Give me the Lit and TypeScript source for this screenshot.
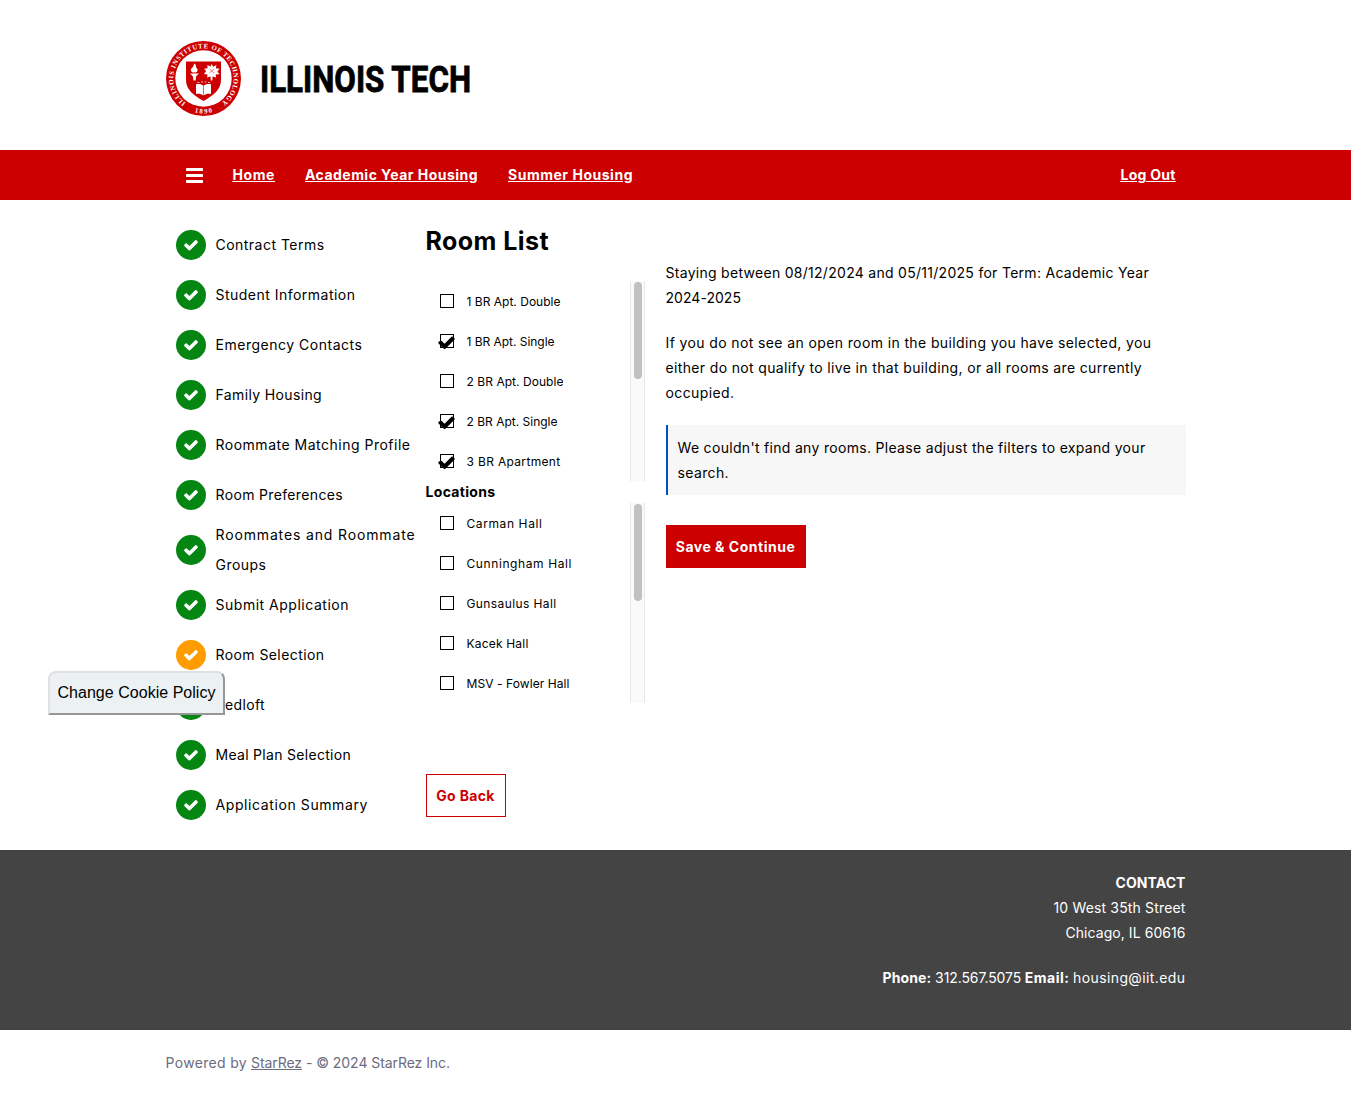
import { LitElement, html, css, svg } from "lit";
import { customElement, property } from "lit/decorators.js";
import { classMap } from "lit/directives/class-map.js";

/** A single line of text, tracked evenly so that it fills a given measure. */
@customElement("tracked-line")
class TrackedLine extends LitElement {
  static styles = css`
    :host {
      display: inline-block;
      white-space: nowrap;
      text-decoration: inherit;
    }
  `;
  @property({ type: Number }) measure = 0;

  protected firstUpdated() {
    this.fit();
    document.fonts?.ready.then(() => this.fit());
  }

  private fit() {
    const count = (this.textContent ?? "").length;
    if (!count || !this.measure) return;
    this.style.letterSpacing = "0px";
    const natural = this.getBoundingClientRect().width;
    this.style.letterSpacing = `${(this.measure - natural) / count}px`;
  }

  render() {
    return html`<slot></slot>`;
  }
}

type Line = [text: string, measure: number];
const line = ([text, measure]: Line) =>
  html`<tracked-line measure=${measure}>${text}</tracked-line>`;

const steps: { lines: Line[]; current?: boolean }[] = [
  { lines: [["Contract Terms", 109]] },
  { lines: [["Student Information", 140]] },
  { lines: [["Emergency Contacts", 147]] },
  { lines: [["Family Housing", 106.5]] },
  { lines: [["Roommate Matching Profile", 195]] },
  { lines: [["Room Preferences", 127.5]] },
  { lines: [["Roommates and Roommate", 200], ["Groups", 51]] },
  { lines: [["Submit Application", 133.5]] },
  { lines: [["Room Selection", 109]], current: true },
  { lines: [["Bedloft", 49.5]] },
  { lines: [["Meal Plan Selection", 135.5]] },
  { lines: [["Application Summary", 152.5]] },
];

const roomTypes: { label: Line; checked?: boolean }[] = [
  { label: ["1 BR Apt. Double", 94] },
  { label: ["1 BR Apt. Single", 88], checked: true },
  { label: ["2 BR Apt. Double", 97] },
  { label: ["2 BR Apt. Single", 91], checked: true },
  { label: ["3 BR Apartment", 94], checked: true },
];

const locations: { label: Line; checked?: boolean }[] = [
  { label: ["Carman Hall", 76] },
  { label: ["Cunningham Hall", 105.5] },
  { label: ["Gunsaulus Hall", 90] },
  { label: ["Kacek Hall", 62] },
  { label: ["MSV - Fowler Hall", 103] },
];

const CHECK =
  "M1671 566q0 40-28 68l-724 724-136 136q-28 28-68 28t-68-28l-136-136-362-362q-28-28-28-68t28-68l136-136q28-28 68-28t68 28l294 295 656-657q28-28 68-28t68 28l136 136q28 28 28 68z";

const seal = svg`
  <circle cx="37.5" cy="37.5" r="37.5" fill="#cc0000"/>
  <circle cx="37.5" cy="37.500" r="28.2" fill="#fff"/>
  <path id="ring" fill="none" d="M20.2 62.2A30.2 30.2 0 1 1 54.8 62.2"/>
  <path id="base" fill="none" d="M20 67.8A35 35 0 0 0 55 67.8"/>
  <text class="seal-text"><textPath href="#ring" startOffset="0.500" textLength="151">ILLINOIS INSTITUTE OF TECHNOLOGY</textPath></text>
  <text class="seal-text" text-anchor="middle"><textPath href="#base" startOffset="50%" textLength="18">1890</textPath></text>
  <path d="M20 20.500H55V39C55 49 47 54.500 37.500 60C28 54.500 20 49 20 39Z" fill="#cc0000"/>
  <g fill="#fff">
    <path d="M24 32.500h9l-2.700 2.400-.8 4.600h-2l-.8-4.600zM28.300 22.500c2.900 2 .8 3.200 2.800 5.100c1.300 1.500.1 3.600-1.500 4h-2.600c-2.900-1.200-2.500-3.900-.6-5.100c1.700-1.200.8-2.400 1.900-4z"/>
    <path d="M45.600 23l1.600 2.700 3.200-1.700-.5 3.300 3.700.5-2.200 2.600 2.100 2.800-3.700.3.200 3-3.400-.9-.3 4h-1.500l-.3-4-3.400.9.400-3.100-3.600-.4 2.200-2.700-2-2.600 3.500-.4-.3-3.300 3.100 1.500z"/>
    <path d="M30 43.300c3-.8 5.500-.2 7.200 1.200v9.900c-2-1.500-4.400-2-7.200-1.300zM45 43.300c-3-.8-5.500-.2-7.200 1.200v9.900c2-1.500 4.400-2 7.200-1.300z"/>
    <path d="M31.500 41h2v1h-2zM35 40.500h2v1h-2zM38.500 40.500h2v1h-2zM42 41h2v1h-2z" opacity=".7"/>
  </g>
  <path d="M43.500 28l2.200 2 2.500-2M43.500 32l2.200-2 2.500 2" stroke="#cc0000" stroke-width=".5" fill="none"/>
`;

@customElement("app-root")
class AppRoot extends LitElement {
  static styles = css`
    :host {
      display: block;
      position: relative;
      height: 1095px;
      background: #fff;
      color: #000;
      font: 14px/25px Inter, "Open Sans", sans-serif;
    }
    * {
      box-sizing: border-box;
    }
    p, h1, ul {
      margin: 0;
      padding: 0;
    }
    .wrap {
      width: 1020px;
      margin: 0 auto;
    }
    .brand {
      height: 150px;
      display: flex;
      align-items: flex-start;
      padding-top: 41px;
    }
    .seal {
      width: 75px;
      height: 75px;
    }
    .seal-text {
      font: 700 6.8px "Liberation Serif", serif;
      fill: #fff;
    }
    .wordmark {
      width: 220px;
      height: 75px;
      margin-left: 20px;
    }
    .wordmark-text {
      font: 700 36px Roboto, sans-serif;
      stroke: #000;
      stroke-width: 0.8px;
    }
    .nav {
      height: 50px;
      background: #cc0000;
    }
    .nav-row {
      height: 50px;
      display: flex;
      align-items: center;
      gap: 30px;
      padding: 0 10px 0 20px;
    }
    .nav-link {
      display: flex;
      padding-bottom: 1px;
      color: #fff;
      font-weight: 700;
      text-decoration: underline;
    }
    .nav-link.end {
      margin-left: auto;
    }
    .menu {
      width: 17px;
      height: 15px;
      display: block;
      margin-top: 1px;
    }
    .main {
      height: 650px;
      padding-top: 20px;
      display: grid;
      grid-template-columns: 260px 220px 540px;
    }
    .steps {
      list-style: none;
      padding-left: 10px;
      line-height: 30px;
    }
    .step {
      min-height: 50px;
      display: flex;
      align-items: center;
      gap: 10px;
    }
    .step-lines {
      display: flex;
      flex-direction: column;
      align-items: flex-start;
    }
    .dot {
      width: 30px;
      height: 30px;
      flex: none;
      border-radius: 50%;
      background: #058613;
      display: grid;
      place-items: center;
    }
    .dot.current {
      background: #ff9c00;
    }
    .dot-check {
      width: 16px;
      height: 16px;
      fill: #fff;
    }
    .filters {
      width: 220px;
      display: flex;
      flex-direction: column;
      align-items: flex-start;
    }
    .title {
      height: 61px;
      padding-top: 3px;
      font-size: 25px;
      line-height: 36px;
      font-weight: 700;
    }
    .group {
      line-height: 22px;
      font-weight: 700;
      height: 22px;
    }
    .list {
      width: 219.5px;
      height: 200px;
      display: flex;
      justify-content: space-between;
      font-size: 12px;
    }
    .option {
      height: 40px;
      display: flex;
      align-items: center;
      gap: 12.5px;
      padding-left: 14.5px;
    }
    .box {
      width: 14px;
      height: 14px;
      border: 1px solid #000;
    }
    .box-check {
      display: block;
      width: 19px;
      height: 19px;
      margin: -2.5px 0 0 -3.8px;
    }
    .track {
      width: 15px;
      height: 200px;
      background: #fafafa;
      border: solid #e8e8e8;
      border-width: 0 1px;
      padding: 1px 3px;
    }
    .thumb {
      width: 8px;
      height: 97px;
      border-radius: 4px;
      background: #c1c1c1;
    }
    .button {
      height: 43px;
      display: inline-flex;
      align-items: center;
      justify-content: center;
      border: 1px solid #cc0000;
      font-weight: 700;
    }
    .back {
      width: 80px;
      margin-top: 71px;
      color: #cc0000;
    }
    .save {
      width: 140px;
      margin-top: 10px;
      background: #cc0000;
      color: #fff;
    }
    .results {
      margin-left: 20px;
      padding-top: 40px;
      width: 520px;
      display: flex;
      flex-direction: column;
      align-items: flex-start;
      gap: 20px;
    }
    .lines {
      display: flex;
      flex-direction: column;
      align-items: flex-start;
    }
    .notice {
      width: 520px;
      border-left: 2px solid #0050c8;
      background: #f7f7f7;
      padding: 10px;
    }
    .footer {
      height: 180px;
      background: #444;
      color: #fff;
      padding-top: 20px;
    }
    .contact {
      display: flex;
      flex-direction: column;
      align-items: flex-end;
    }
    .strong {
      font-weight: 700;
    }
    .reach {
      display: flex;
      gap: 3.7px;
      margin-top: 20px;
    }
    .legal {
      padding-top: 20px;
      display: flex;
      gap: 4px;
      color: #6b6c80;
    }
    .legal-link {
      display: flex;
      text-decoration: underline;
    }
    .cookie {
      position: absolute;
      left: 48px;
      top: 671px;
      width: 177px;
      height: 44px;
      padding: 0;
      border: 2px solid;
      border-color: #e0e0e0 #979797 #979797 #e0e0e0;
      border-radius: 8px 8px 0 0;
      background: #ecf1f4;
      color: #000;
      font: 16px "Liberation Sans", sans-serif;
    }
  `;

  private renderList(options: { label: Line; checked?: boolean }[]) {
    return html`<div class="list">
      <div>
        ${options.map(
          (o) => html`<div class="option">
            <span class="box"
              >${o.checked
                ? html`<svg class="box-check" viewBox="0 0 1792 1792"><path d=${CHECK} /></svg>`
                : null}</span
            >
            ${line(o.label)}
          </div>`
        )}
      </div>
      <div class="track"><div class="thumb"></div></div>
    </div>`;
  }

  render() {
    return html`
      <header class="wrap brand">
        <svg class="seal" viewBox="0 0 75 75">${seal}</svg>
        <svg class="wordmark" viewBox="0 0 220 75">
          <text class="wordmark-text" x="-1" y="50.5" textLength="211" lengthAdjust="spacingAndGlyphs">ILLINOIS TECH</text>
        </svg>
      </header>
      <nav class="nav">
        <div class="wrap nav-row">
          <svg class="menu" viewBox="0 0 17 15" fill="#fff">
            <rect width="17" height="3" rx=".4" />
            <rect y="6" width="17" height="3" rx=".4" />
            <rect y="12" width="17" height="3" rx=".4" />
          </svg>
          <a class="nav-link">${line(["Home", 42.5])}</a>
          <a class="nav-link">${line(["Academic Year Housing", 173])}</a>
          <a class="nav-link">${line(["Summer Housing", 125])}</a>
          <a class="nav-link end">${line(["Log Out", 55])}</a>
        </div>
      </nav>
      <main class="wrap main">
        <ul class="steps">
          ${steps.map(
            (s) => html`<li class="step">
              <span class=${classMap({ dot: true, current: !!s.current })}>
                <svg class="dot-check" viewBox="0 0 1792 1792"><path d=${CHECK} /></svg>
              </span>
              <span class="step-lines">${s.lines.map(line)}</span>
            </li>`
          )}
        </ul>
        <section class="filters">
          <h1 class="title">${line(["Room List", 123.5])}</h1>
          ${this.renderList(roomTypes)}
          <div class="group">${line(["Locations", 70])}</div>
          ${this.renderList(locations)}
          <a class="button back">${line(["Go Back", 58.5])}</a>
        </section>
        <section class="results">
          <p class="lines">
            ${line(["Staying between 08/12/2024 and 05/11/2025 for Term: Academic Year", 483.5])}
            ${line(["2024-2025", 75.5])}
          </p>
          <p class="lines">
            ${line(["If you do not see an open room in the building you have selected, you", 486])}
            ${line(["either do not qualify to live in that building, or all rooms are currently", 476.5])}
            ${line(["occupied.", 69])}
          </p>
          <div class="notice lines">
            ${line(["We couldn't find any rooms. Please adjust the filters to expand your", 468])}
            ${line(["search.", 51.5])}
          </div>
          <a class="button save">${line(["Save & Continue", 119.5])}</a>
        </section>
      </main>
      <footer class="footer">
        <div class="wrap contact">
          <span class="strong">${line(["CONTACT", 70])}</span>
          ${line(["10 West 35th Street", 132])} ${line(["Chicago, IL 60616", 120])}
          <div class="reach">
            <span class="strong">${line(["Phone:", 49])}</span>
            ${line(["312.567.5075", 86])}
            <span class="strong">${line(["Email:", 44.5])}</span>
            ${line(["housing@iit.edu", 112.5])}
          </div>
        </div>
      </footer>
      <div class="wrap legal">
        ${line(["Powered by", 81.5])}
        <a class="legal-link">${line(["StarRez", 51])}</a>
        ${line(["- © 2024 StarRez Inc.", 144])}
      </div>
      <button class="cookie">${line(["Change Cookie Policy", 158])}</button>
    `;
  }
}
